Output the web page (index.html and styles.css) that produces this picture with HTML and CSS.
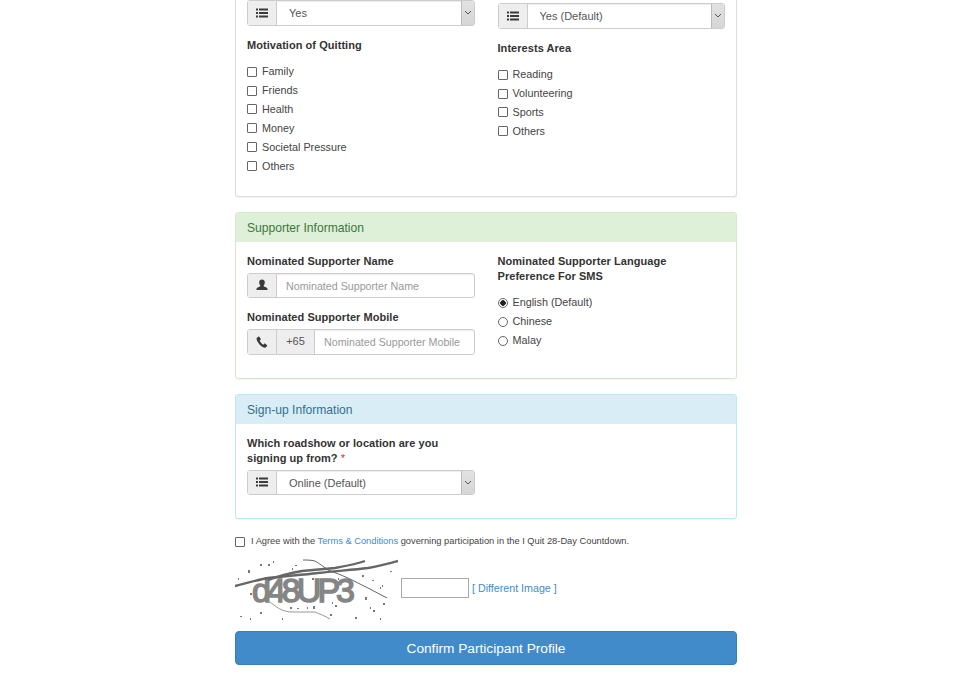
FILE: index.html
```html
<!DOCTYPE html>
<html lang="en">
<head>
    <meta charset="UTF-8">
    <meta name="viewport" content="width=device-width, initial-scale=1.0">
    <title>Participant Profile</title>
    <link rel="stylesheet" href="styles.css">
</head>
<body>

<div class="container">

    <div class="panel panel-cut">
        <div class="panel-body columns">
            <div class="col">
                <div class="input-group select-group">
                    <span class="addon"><svg class="icon" viewBox="0 0 12 12"><path d="M0 1.5h2v2H0zM3 1.5h9v2H3zM0 5h2v2H0zM3 5h9v2H3zM0 8.5h2v2H0zM3 8.5h9v2H3z"/></svg></span>
                    <select class="control"><option>Yes</option></select>
                    <span class="select-arrow"><svg viewBox="0 0 8 5"><path d="M1 1l3 3 3-3"/></svg></span>
                </div>
                <p class="field-label group-label">Motivation of Quitting</p>
                <label class="check"><input type="checkbox">Family</label>
                <label class="check"><input type="checkbox">Friends</label>
                <label class="check"><input type="checkbox">Health</label>
                <label class="check"><input type="checkbox">Money</label>
                <label class="check"><input type="checkbox">Societal Pressure</label>
                <label class="check"><input type="checkbox">Others</label>
            </div>
            <div class="col col-shift">
                <div class="input-group select-group">
                    <span class="addon"><svg class="icon" viewBox="0 0 12 12"><path d="M0 1.5h2v2H0zM3 1.5h9v2H3zM0 5h2v2H0zM3 5h9v2H3zM0 8.5h2v2H0zM3 8.5h9v2H3z"/></svg></span>
                    <select class="control"><option>Yes (Default)</option></select>
                    <span class="select-arrow"><svg viewBox="0 0 8 5"><path d="M1 1l3 3 3-3"/></svg></span>
                </div>
                <p class="field-label group-label">Interests Area</p>
                <label class="check"><input type="checkbox">Reading</label>
                <label class="check"><input type="checkbox">Volunteering</label>
                <label class="check"><input type="checkbox">Sports</label>
                <label class="check"><input type="checkbox">Others</label>
            </div>
        </div>
    </div>

    <div class="panel panel-success">
        <div class="panel-heading">Supporter Information</div>
        <div class="panel-body columns">
            <div class="col">
                <p class="field-label">Nominated Supporter Name</p>
                <div class="input-group">
                    <span class="addon"><svg class="icon" viewBox="0 0 12 12"><path d="M6 .5c1.800 0 2.800 1.300 2.800 3 0 1.300-.5 2.400-1.200 3 0 .8.300 1 1.400 1.400 1.300.5 2.500.9 2.500 2.100v1H.5v-1c0-1.200 1.200-1.600 2.500-2.100 1.100-.4 1.400-.6 1.400-1.400-.7-.6-1.200-1.700-1.200-3 0-1.700 1-3 2.800-3z"/></svg></span>
                    <input class="control" type="text" placeholder="Nominated Supporter Name">
                </div>
                <p class="field-label mobile-label">Nominated Supporter Mobile</p>
                <div class="input-group">
                    <span class="addon"><svg class="icon" viewBox="0 0 12 12"><path d="M2.600.6L.9 1.700c-.6.500-.4 2 .6 3.800 1.300 2.400 3.400 4.700 5.600 5.800 1 .5 2 .6 2.500.2l1.500-1.500c.2-.2.200-.5 0-.7L9 7.600c-.2-.2-.5-.2-.7 0L7.200 8.700C6 8.100 4.300 6 3.700 4.700l1-1.200c.2-.2.200-.4.100-.6L3.300.8C3.100.5 2.800.4 2.600.6z"/></svg></span>
                    <span class="addon addon-text">+65</span>
                    <input class="control" type="text" placeholder="Nominated Supporter Mobile">
                </div>
            </div>
            <div class="col">
                <p class="field-label">Nominated Supporter Language Preference For SMS</p>
                <div class="radio-list">
                    <label class="check"><input type="radio" name="lang" checked>English (Default)</label>
                    <label class="check"><input type="radio" name="lang">Chinese</label>
                    <label class="check"><input type="radio" name="lang">Malay</label>
                </div>
            </div>
        </div>
    </div>

    <div class="panel panel-info">
        <div class="panel-heading">Sign-up Information</div>
        <div class="panel-body columns">
            <div class="col">
                <p class="field-label"><span>Which roadshow or location are you</span><br><span>signing up from?</span> <span class="required">*</span></p>
                <div class="input-group select-group">
                    <span class="addon"><svg class="icon" viewBox="0 0 12 12"><path d="M0 1.5h2v2H0zM3 1.5h9v2H3zM0 5h2v2H0zM3 5h9v2H3zM0 8.5h2v2H0zM3 8.5h9v2H3z"/></svg></span>
                    <select class="control"><option>Online (Default)</option></select>
                    <span class="select-arrow"><svg viewBox="0 0 8 5"><path d="M1 1l3 3 3-3"/></svg></span>
                </div>
            </div>
            <div class="col"></div>
        </div>
    </div>

    <label class="agree"><input type="checkbox"><span>I Agree with the <a href="#">Terms &amp; Conditions</a> governing participation in the I Quit 28-Day Countdown.</span></label>

    <div class="captcha-row">
        <svg class="captcha" viewBox="0 0 163 62">
            <text x="17" y="44" class="captcha-text" textLength="103" lengthAdjust="spacing">d48UP3</text>
            <path class="captcha-line" d="M0 28C12 25 22 22 33 20 50 18 66 17 83 15 100 13 117 12 133 10 145 8 155 5 163 3"/>
            <path class="captcha-line" d="M33 22C44 18 56 15 67 13 78 12 89 11 100 10 111 8 122 6 130 3"/>
            <path class="captcha-thin" d="M68 2C72 2 76 2 80 3 85 6 89 9 93 12 101 15 109 18 117 22 122 25 128 27 133 30 139 33 146 37 152 40"/>
            <path class="captcha-faint" d="M33 43C38 46 42 50 47 52 50 53 53 54 57 54"/>
            <path class="captcha-pale" d="M57 54H80"/>
            <path class="captcha-faint" d="M80 54C85 56 90 58 95 61"/>
            <g class="captcha-dots">
                <rect x="13" y="12" width="2" height="3"/><rect x="25" y="6" width="2" height="2"/><rect x="33" y="6" width="2" height="2"/>
                <rect x="38" y="3" width="1" height="2"/><rect x="3" y="20" width="1" height="2"/><rect x="60" y="7" width="2" height="1"/>
                <rect x="57" y="10" width="1" height="2"/><rect x="15" y="35" width="2" height="2"/><rect x="25" y="54" width="2" height="2"/>
                <rect x="5" y="58" width="2" height="1"/><rect x="15" y="60" width="1" height="2"/><rect x="47" y="60" width="1" height="2"/>
                <rect x="55" y="49" width="2" height="2"/><rect x="62" y="50" width="2" height="1"/><rect x="72" y="49" width="1" height="2"/>
                <rect x="78" y="48" width="2" height="3"/><rect x="97" y="44" width="1" height="2"/><rect x="100" y="47" width="2" height="2"/>
                <rect x="95" y="56" width="2" height="2"/><rect x="120" y="59" width="2" height="2"/><rect x="145" y="60" width="1" height="2"/>
                <rect x="135" y="49" width="1" height="2"/><rect x="138" y="52" width="2" height="2"/><rect x="130" y="39" width="2" height="3"/>
                <rect x="148" y="45" width="2" height="2"/><rect x="137" y="22" width="2" height="1"/><rect x="147" y="27" width="1" height="2"/>
                <rect x="155" y="13" width="2" height="1"/><rect x="145" y="29" width="1" height="2"/><rect x="127" y="17" width="2" height="2"/>
                <rect x="77" y="20" width="2" height="2"/><rect x="103" y="20" width="1" height="2"/>
            </g>
        </svg>
        <input class="captcha-input" type="text">
        <a class="captcha-link" href="#">[ Different Image ]</a>
    </div>

    <button class="submit-btn">Confirm Participant Profile</button>

</div>

</body>
</html>
```

FILE: styles.css
```css
body {
    margin: 0;
    font-family: "Liberation Sans", Arial, sans-serif;
    font-size: 11px;
    line-height: 15px;
    color: #333;
    background-color: #fff;
}
a {
    color: #428bca;
    text-decoration: none;
}
.container {
    width: 502px;
    margin-left: 235px;
    padding-bottom: 12px;
}
.panel {
    border: 1px solid #ddd;
    border-radius: 3px;
    margin-bottom: 15px;
    box-shadow: 0 1px 1px rgba(0, 0, 0, 0.05);
}
.panel-cut {
    border-top: none;
    border-radius: 0 0 3px 3px;
}
.panel-success {
    border-color: #d6e9c6;
}
.panel-info {
    border-color: #bce8f1;
}
.panel-heading {
    height: 28.5px;
    line-height: 30px;
    padding: 0 11px;
    font-size: 12.1px;
}
.panel-success .panel-heading {
    background-color: #dff0d8;
    color: #3c763d;
}
.panel-info .panel-heading {
    background-color: #d9edf7;
    color: #31708f;
}
.panel-body {
    padding: 12px 11px 23.5px;
}
.panel-cut .panel-body {
    padding-top: 0;
    padding-bottom: 20.5px;
}
.panel-info .panel-body {
    padding-bottom: 23px;
}
.columns {
    display: flex;
    gap: 23px;
}
.col {
    width: 228px;
}
.col-shift {
    padding-top: 3px;
}
.field-label {
    margin: 0 0 4px;
    font-weight: bold;
    letter-spacing: 0.05px;
    color: #333;
}
.group-label {
    margin: 12px 0 9.7px;
}
.mobile-label {
    margin-top: 12px;
}
.required {
    color: #a94442;
    font-weight: normal;
}
.input-group {
    display: flex;
    height: 25.5px;
    border: 1px solid #ccc;
    border-radius: 3px;
    box-sizing: border-box;
    box-shadow: inset 0 1px 1px rgba(0, 0, 0, 0.075);
    position: relative;
}
.addon {
    flex: none;
    width: 28px;
    display: flex;
    align-items: center;
    justify-content: center;
    background-color: #eee;
    border-right: 1px solid #ccc;
    color: #555;
}
.addon-text {
    width: 37px;
}
.icon {
    width: 12px;
    height: 12px;
    fill: #3a3a3a;
}
.control {
    flex: 1;
    min-width: 0;
    border: none;
    outline: none;
    background: none;
    font: inherit;
    font-size: 10.7px;
    color: #555;
    padding: 2px 9px 0;
}
.control::placeholder {
    color: #999;
    opacity: 1;
}
select.control {
    appearance: none;
    font-size: 11px;
    padding: 2px 12px 0;
}
.select-arrow {
    position: absolute;
    top: 0;
    right: 0;
    bottom: 0;
    width: 12px;
    display: flex;
    align-items: center;
    justify-content: center;
    background: linear-gradient(#e2e2e2, #d6d6d6);
    border-left: 1px solid #bbb;
    pointer-events: none;
}
.select-arrow svg {
    width: 8px;
    height: 5px;
    fill: none;
    stroke: #555;
    stroke-width: 1;
}
.check {
    display: flex;
    align-items: center;
    height: 18.9px;
    font-size: 10.8px;
    color: #444;
}
.check input,
.agree input {
    appearance: none;
    flex: none;
    width: 10px;
    height: 10px;
    margin: 0 5px 0 0;
    border: 1px solid #666;
    border-radius: 1px;
    background-color: #fff;
}
.check input[type="radio"] {
    border-radius: 50%;
}
.check input[type="radio"]:checked {
    background: radial-gradient(circle, #222 0 2.5px, #fff 3px);
}
.radio-list {
    margin-top: 10px;
}
.agree {
    display: flex;
    align-items: center;
    font-size: 9.3px;
    color: #444;
}
.agree input {
    margin-right: 6px;
}
.captcha-row {
    display: flex;
    align-items: center;
    margin-top: 8.5px;
}
.captcha {
    width: 163px;
    height: 62px;
}
.captcha-text {
    font-family: "Liberation Sans", Arial, sans-serif;
    font-size: 34px;
    fill: #858585;
    stroke: #858585;
    stroke-width: 1.5;
}
.captcha-line {
    fill: none;
    stroke: #666;
    stroke-width: 2.4;
}
.captcha-thin {
    fill: none;
    stroke: #666;
    stroke-width: 1;
}
.captcha-faint {
    fill: none;
    stroke: #999;
    stroke-width: 1;
}
.captcha-pale {
    fill: none;
    stroke: #ccc;
    stroke-width: 2;
}
.captcha-dots {
    fill: #777;
}
.captcha-input {
    box-sizing: border-box;
    width: 68px;
    height: 20px;
    margin: 0 3px 2px 3px;
    border: 1px solid #aaa;
}
.captcha-link {
    font-size: 10.7px;
}
.submit-btn {
    display: block;
    width: 100%;
    height: 34px;
    margin-top: 11px;
    padding-top: 2px;
    background-color: #428bca;
    border: 1px solid #357ebd;
    border-radius: 4px;
    color: #fff;
    font: inherit;
    font-size: 13.7px;
}
```
